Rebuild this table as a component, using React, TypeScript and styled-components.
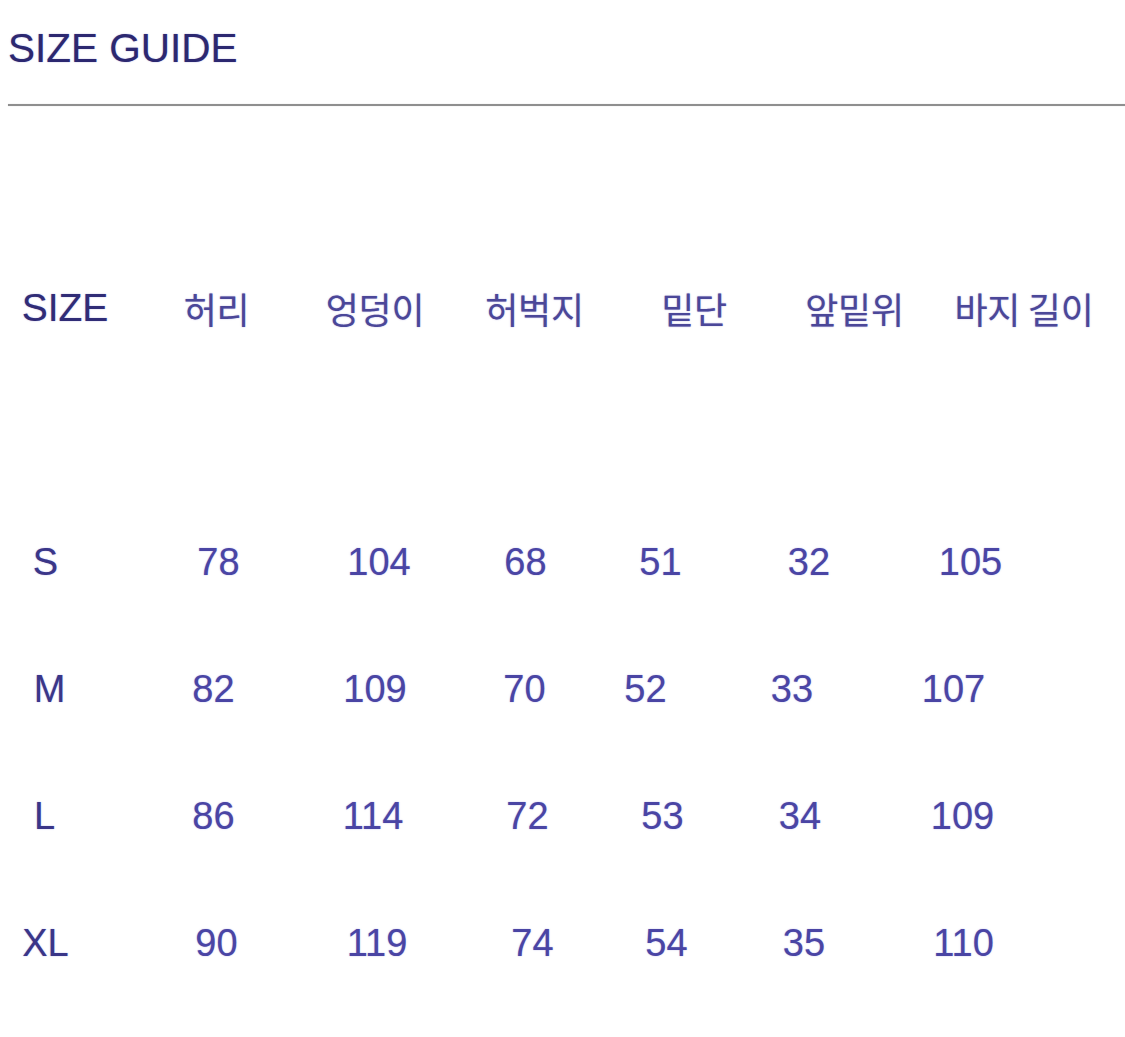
import React from "react";
import styled, { createGlobalStyle } from "styled-components";

const GlobalStyle = createGlobalStyle`
  html, body {
    margin: 0;
    padding: 0;
    background: #ffffff;
  }
  body {
    font-family: "Liberation Sans", Arial, "Noto Sans CJK KR", sans-serif;
  }
`;

const Page = styled.div`
  width: 1125px;
  height: 1037px;
  overflow: hidden;
  background: #ffffff;
  display: flex;
  flex-direction: column;
`;

const TitleBar = styled.header`
  padding: 25px 0 0 8px;
  display: flex;
  flex-direction: column;
`;

const Title = styled.h1`
  margin: 0;
  font-family: "Liberation Sans", Arial, sans-serif;
  font-weight: 400;
  font-size: 40.5px;
  line-height: 46px;
  color: #2c2870;
  text-shadow: 0 0 1.2px rgba(70, 60, 170, 0.6);
`;

const Rule = styled.hr`
  margin: 33px 0 0 0;
  border: none;
  height: 2px;
  background: #8f8f8f;
  box-shadow: 0 0 1px rgba(0, 0, 0, 0.25);
`;

const Table = styled.section`
  display: flex;
  flex-direction: column;
  margin-top: 162px;
`;

const HeaderRow = styled.div`
  display: grid;
  grid-template-columns: 140px 155px 160px 159px 160px 165px 170px;
  height: 80px;
  align-items: center;
  margin-bottom: 151px;
`;

const HeaderCell = styled.div<{ $hangul?: boolean; $dx?: number }>`
  display: flex;
  justify-content: center;
  white-space: nowrap;
  font-family: ${(p) =>
    p.$hangul
      ? `"Noto Sans CJK KR", "Liberation Sans", sans-serif`
      : `"Liberation Sans", Arial, sans-serif`};
  font-size: ${(p) => (p.$hangul ? "36px" : "39px")};
  letter-spacing: ${(p) => (p.$hangul ? "-0.3px" : "0")};
  line-height: 80px;
  color: ${(p) => (p.$hangul ? "#4b4798" : "#302c76")};
  text-shadow: 0 0 1.3px rgba(80, 70, 180, 0.55);
  transform: translateX(${(p) => p.$dx ?? 0}px);
`;

const DataRow = styled.div`
  display: grid;
  grid-template-columns: 131px 165px 156px 141px 137px 152px 163px;
  height: 127px;
  align-items: center;
`;

const DataCell = styled.div<{ $size?: boolean }>`
  display: flex;
  justify-content: center;
  white-space: nowrap;
  font-family: "Liberation Sans", Arial, sans-serif;
  font-size: 38px;
  line-height: 127px;
  color: ${(p) => (p.$size ? "#3a3688" : "#4a45a4")};
  text-shadow: 0 0 1.3px rgba(90, 80, 200, 0.55);
`;

const headers: { label: string; hangul: boolean; dx: number }[] = [
  { label: "SIZE", hangul: false, dx: -5 },
  { label: "허리", hangul: true, dx: -1 },
  { label: "엉덩이", hangul: true, dx: 0 },
  { label: "허벅지", hangul: true, dx: 0 },
  { label: "밑단", hangul: true, dx: 0 },
  { label: "앞밑위", hangul: true, dx: -2 },
  { label: "바지 길이", hangul: true, dx: 0 },
];

type Row = { values: string[]; dx: number[] };

const rows: Row[] = [
  { values: ["S", "78", "104", "68", "51", "32", "105"], dx: [-20, 5, 5, 3, -1, 3, 7] },
  { values: ["M", "82", "109", "70", "52", "33", "107"], dx: [-16, 0, 1, 2, -16, -14, -10] },
  { values: ["L", "86", "114", "72", "53", "34", "109"], dx: [-21, 0, -1, 5, 1, -6, -1] },
  { values: ["XL", "90", "119", "74", "54", "35", "110"], dx: [-20, 3, 3, 10, 5, -2, 0] },
];

export default function App() {
  return (
    <Page>
      <GlobalStyle />
      <TitleBar>
        <Title>SIZE GUIDE</Title>
        <Rule />
      </TitleBar>
      <Table>
        <HeaderRow>
          {headers.map((h) => (
            <HeaderCell key={h.label} $hangul={h.hangul} $dx={h.dx}>
              {h.label}
            </HeaderCell>
          ))}
        </HeaderRow>
        {rows.map((r) => (
          <DataRow key={r.values[0]}>
            {r.values.map((v, i) => (
              <DataCell
                key={i}
                $size={i === 0}
                style={{ transform: `translateX(${r.dx[i]}px)` }}
              >
                {v}
              </DataCell>
            ))}
          </DataRow>
        ))}
      </Table>
    </Page>
  );
}
